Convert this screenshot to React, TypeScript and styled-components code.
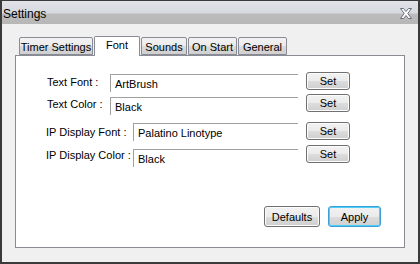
import styled, { createGlobalStyle } from 'styled-components'

const GlobalStyle = createGlobalStyle`
  html, body {
    margin: 0;
    padding: 0;
    background: #f0f0f0;
  }
  body {
    font-family: "Liberation Sans", Arial, sans-serif;
    font-size: 11px;
    color: #000;
  }
`

const Window = styled.div`
  width: 420px;
  height: 264px;
  box-sizing: border-box;
  border: 1px solid #3a3a3a;
  border-left-width: 2px;
  border-right-width: 2px;
  border-bottom-width: 2px;
  background: #f0f0f0;
  display: flex;
  flex-direction: column;
`

const TitleBar = styled.div`
  height: 23px;
  flex: none;
  display: flex;
  align-items: center;
  justify-content: space-between;
  padding: 0 6px 0 1px;
  background: linear-gradient(to bottom, #e0e3e7 0px, #d6d9de 12px, #bcbcbc 13px, #b7b7b7 23px);
  font-size: 12px;
`

const Title = styled.span`
  margin-top: 2px;
`

const Body = styled.div`
  flex: 1;
  display: flex;
  flex-direction: column;
  padding: 12px 13px 0 13px;
`

const TabStrip = styled.div`
  display: flex;
  align-items: flex-end;
  padding-left: 4px;
  height: 19px;
  position: relative;
  z-index: 1;
`

const Tab = styled.div<{ $active?: boolean; $width: number }>`
  box-sizing: border-box;
  width: ${(p) => p.$width}px;
  height: ${(p) => (p.$active ? '20px' : '18px')};
  margin-bottom: ${(p) => (p.$active ? '-1px' : '0')};
  margin-right: 1px;
  display: flex;
  justify-content: center;
  align-items: flex-start;
  padding-top: ${(p) => (p.$active ? '2px' : '3px')};
  border: 1px solid #898c95;
  border-bottom: ${(p) => (p.$active ? 'none' : '1px solid #898c95')};
  border-radius: 2px 2px 0 0;
  background: ${(p) =>
    p.$active ? '#fff' : 'linear-gradient(to bottom, #f2f2f2, #ebebeb 50%, #dcdcdc 51%, #cfcfcf)'};
  font-size: 11px;
  white-space: nowrap;
`

const Panel = styled.div`
  box-sizing: border-box;
  width: 390px;
  height: 193px;
  border: 1px solid #898c95;
  background: #fff;
  display: flex;
  flex-direction: column;
  padding: 16px 0 0 0;
`

const Row = styled.div<{ $gap: number }>`
  display: flex;
  align-items: flex-start;
  margin-top: ${(p) => p.$gap}px;
  height: 18px;
`

const Label = styled.div<{ $left: number; $width: number }>`
  margin-left: ${(p) => p.$left}px;
  width: ${(p) => p.$width}px;
  font-size: 11px;
  padding-top: 4px;
  white-space: nowrap;
`

const Field = styled.div<{ $width: number; $drop: number }>`
  box-sizing: border-box;
  width: ${(p) => p.$width}px;
  height: 18px;
  margin-top: ${(p) => p.$drop}px;
  border-top: 1px solid #a0a0a0;
  border-left: 1px solid #a0a0a0;
  padding: 3px 0 0 4px;
  font-size: 11px;
  white-space: nowrap;
  overflow: hidden;
`

const Button = styled.button<{ $width: number; $focus?: boolean }>`
  box-sizing: border-box;
  width: ${(p) => p.$width}px;
  height: 18px;
  margin-left: 8px;
  padding: 0;
  font-family: "Liberation Sans", Arial, sans-serif;
  font-size: 11px;
  color: #000;
  border: 1px solid ${(p) => (p.$focus ? '#3c9fd6' : '#707070')};
  border-radius: 3px;
  box-shadow: ${(p) => (p.$focus ? 'inset 0 0 0 1px #4ad0fb' : 'inset 0 0 0 1px #fcfcfc')};
  background: linear-gradient(to bottom, #f2f2f2, #ebebeb 50%, #dddddd 51%, #cfcfcf);
`

const Footer = styled.div`
  margin-top: auto;
  display: flex;
  justify-content: flex-end;
  padding: 0 23px 20px 0;

  & > ${Button} {
    height: 21px;
  }
`

const CloseIcon = () => (
  <svg width="12" height="11" viewBox="0 0 12 11" style={{ marginTop: 2 }}>
    <path
      d="M0.5 0.5 H3.5 L6 3.5 L8.5 0.5 H11.5 L7.8 5.5 L11.5 10.5 H8.5 L6 7.5 L3.5 10.5 H0.5 L4.2 5.5 Z"
      fill="#fff"
      stroke="#6b6f7d"
      strokeWidth="1"
    />
  </svg>
)

const rows = [
  { label: 'Text Font :', value: 'ArtBrush', left: 31, labelWidth: 63, gap: 0, drop: 2 },
  { label: 'Text Color :', value: 'Black', left: 31, labelWidth: 63, gap: 4, drop: 3 },
  { label: 'IP Display Font :', value: 'Palatino Linotype', left: 30, labelWidth: 87, gap: 10, drop: 1 },
  { label: 'IP Display Color :', value: 'Black', left: 30, labelWidth: 87, gap: 5, drop: 4 },
]

const tabs = [
  { name: 'Timer Settings', width: 74 },
  { name: 'Font', width: 46 },
  { name: 'Sounds', width: 46 },
  { name: 'On Start', width: 49 },
  { name: 'General', width: 49 },
]

export default function App() {
  return (
    <>
      <GlobalStyle />
      <Window>
        <TitleBar>
          <Title>Settings</Title>
          <CloseIcon />
        </TitleBar>
        <Body>
          <TabStrip>
            {tabs.map((t) => (
              <Tab key={t.name} $width={t.width} $active={t.name === 'Font'}>
                {t.name}
              </Tab>
            ))}
          </TabStrip>
          <Panel>
            {rows.map((r) => (
              <Row key={r.label} $gap={r.gap}>
                <Label $left={r.left} $width={r.labelWidth}>
                  {r.label}
                </Label>
                <Field $width={297 - 15 - r.left - r.labelWidth} $drop={r.drop}>
                  {r.value}
                </Field>
                <Button $width={44}>Set</Button>
              </Row>
            ))}
            <Footer>
              <Button $width={56}>Defaults</Button>
              <Button $width={53} $focus>
                Apply
              </Button>
            </Footer>
          </Panel>
        </Body>
      </Window>
    </>
  )
}
